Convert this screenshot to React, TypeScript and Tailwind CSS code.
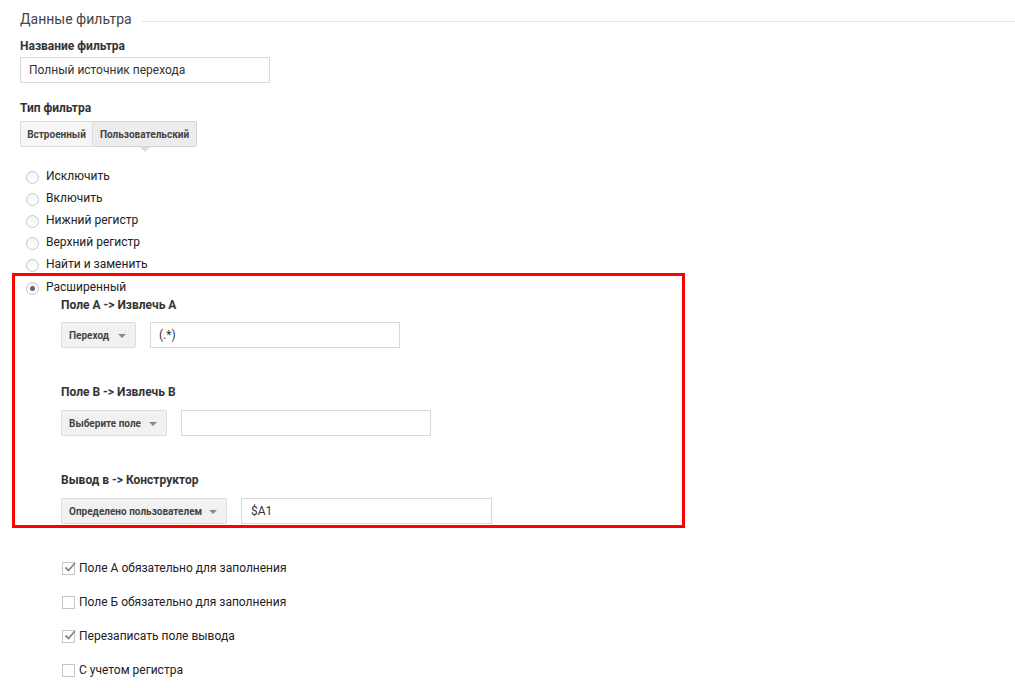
import React from "react";

function Radio({ label, checked = false }: { label: string; checked?: boolean }) {
  return (
    <div className="flex items-center h-[22px]">
      <span className="w-[13px] h-[13px] rounded-full border border-[#c8c8c8] bg-gradient-to-b from-[#f4f4f4] to-white flex items-center justify-center mt-[2px]">
        {checked && <span className="w-[5px] h-[5px] rounded-full bg-[#666]" />}
      </span>
      <span className="ml-[7px] text-[12px] text-[#222]">{label}</span>
    </div>
  );
}

function Dropdown({ label, width }: { label: string; width: string }) {
  return (
    <div className={`${width} h-[26px] bg-[#f1f1f1] border border-[#dcdcdc] rounded-[2px] flex items-center justify-between pl-[7px] pr-[9px]`}>
      <span className="text-[10px] font-bold text-[#444] whitespace-nowrap">{label}</span>
      <span className="w-0 h-0 border-l-[4px] border-r-[4px] border-t-[4px] border-l-transparent border-r-transparent border-t-[#888] mt-[1px]" />
    </div>
  );
}

function Checkbox({ label, checked = false }: { label: string; checked?: boolean }) {
  return (
    <div className="flex items-center h-[34px]">
      <span className="relative w-[13px] h-[13px] border border-[#c6c6c6] bg-white ml-[62px]">
        {checked && (
          <svg className="absolute left-[1px] top-[-2px]" width="13" height="13" viewBox="0 0 13 13">
            <path d="M1.5 6.5 L4.5 9.5 L11 2" fill="none" stroke="#888" strokeWidth="1.8" />
          </svg>
        )}
      </span>
      <span className="ml-[4px] text-[12px] text-[#222]">{label}</span>
    </div>
  );
}

export default function App() {
  return (
    <div className="w-[1015px] h-[688px] bg-white overflow-hidden font-['Roboto',_'Liberation_Sans',_sans-serif] text-[#222]">
      <div className="flex items-center pt-[9px] pl-[20px]">
        <span className="text-[14px] leading-[20px] text-[#444]">Данные фильтра</span>
        <span className="flex-1 h-px bg-[#e3e3e3] ml-[10px] mt-[4px]" />
      </div>

      <div className="pl-[20px]">
        <div className="mt-[9px] text-[12px] leading-[16px] font-bold text-[#333]">Название фильтра</div>
        <div className="mt-[3px] w-[250px] h-[26px] border border-[#d9d9d9] flex items-center pl-[8px] text-[12px] text-[#333]">
          Полный источник перехода
        </div>
        <div className="mt-[17px] text-[12px] leading-[16px] font-bold text-[#333]">Тип фильтра</div>
        <div className="mt-[5px] flex h-[26px]">
          <div className="w-[73px] h-full bg-[#f6f6f6] border border-[#dcdcdc] flex items-center justify-center text-[10px] font-bold text-[#444] rounded-l-[2px]">
            Встроенный
          </div>
          <div className="relative w-[104px] h-full bg-[#ececec] border border-l-0 border-[#d2d2d2] flex items-center justify-center text-[10px] font-bold text-[#444] rounded-r-[2px]">
            Пользовательский
            <span className="absolute left-[47px] top-[25px] w-0 h-0 border-l-[5px] border-r-[5px] border-t-[5px] border-l-transparent border-r-transparent border-t-[#dcdcdc]" />
          </div>
        </div>
      </div>

      <div className="mt-[18px] pl-[26px]">
        <Radio label="Исключить" />
        <Radio label="Включить" />
        <Radio label="Нижний регистр" />
        <Radio label="Верхний регистр" />
        <Radio label="Найти и заменить" />
      </div>

      <div className="-mt-[2px] ml-[12px] w-[673px] border-[3px] border-[#ff0000] pb-[1px]">
        <div className="pl-[11px]">
          <Radio label="Расширенный" checked />
        </div>
        <div className="pl-[46px]">
          <div className="-mt-[1px] text-[12px] leading-[16px] font-bold text-[#333]">Поле А -&gt; Извлечь А</div>
          <div className="mt-[9px] flex">
            <Dropdown label="Переход" width="w-[75px]" />
            <div className="ml-[14px] w-[250px] h-[26px] border border-[#d9d9d9] flex items-center pl-[8px] text-[12px] text-[#333]">(.*)</div>
          </div>

          <div className="mt-[36px] text-[12px] leading-[16px] font-bold text-[#333]">Поле B -&gt; Извлечь B</div>
          <div className="mt-[10px] flex">
            <Dropdown label="Выберите поле" width="w-[106px]" />
            <div className="ml-[14px] w-[250px] h-[26px] border border-[#d9d9d9]" />
          </div>

          <div className="mt-[36px] text-[12px] leading-[16px] font-bold text-[#333]">Вывод в -&gt; Конструктор</div>
          <div className="mt-[10px] flex">
            <Dropdown label="Определено пользователем" width="w-[166px]" />
            <div className="ml-[14px] w-[251px] h-[26px] border border-[#d9d9d9] flex items-center pl-[9px] text-[12px] text-[#333]">$A1</div>
          </div>
        </div>
      </div>

      <div className="mt-[23px]">
        <Checkbox label="Поле А обязательно для заполнения" checked />
        <Checkbox label="Поле Б обязательно для заполнения" />
        <Checkbox label="Перезаписать поле вывода" checked />
        <Checkbox label="С учетом регистра" />
      </div>
    </div>
  );
}
